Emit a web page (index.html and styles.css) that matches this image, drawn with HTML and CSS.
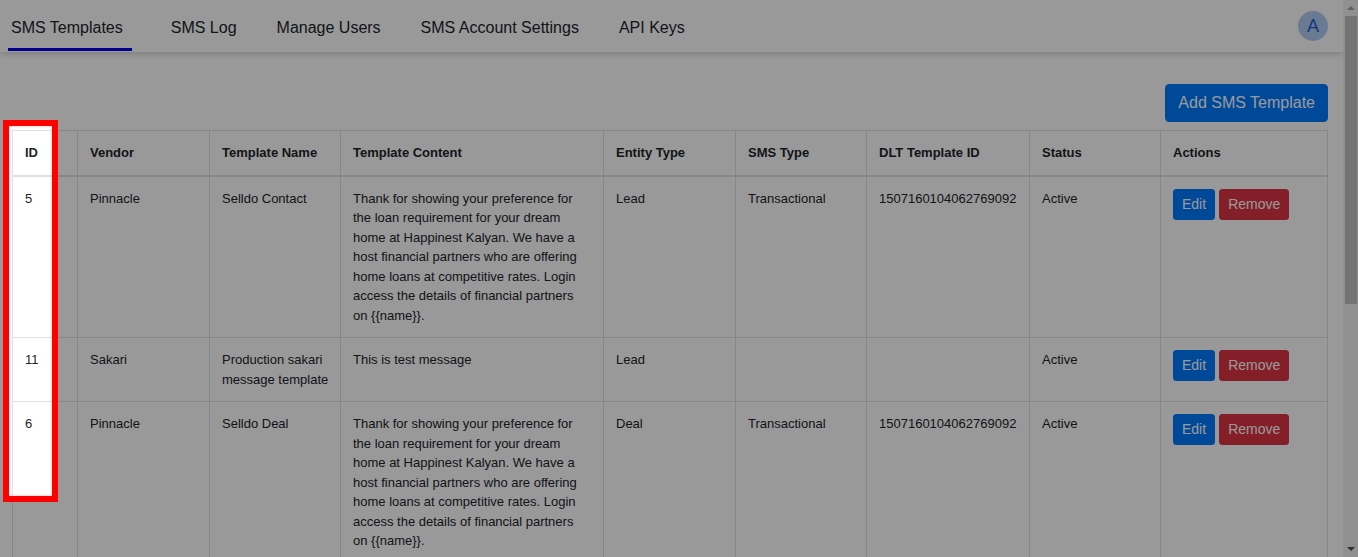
FILE: index.html
```html
<!DOCTYPE html>
<html lang="en">
<head>
<meta charset="utf-8">
<title>SMS Templates</title>
<link rel="stylesheet" href="styles.css">
</head>
<body>
<div class="app">
  <div class="main">
    <header class="navbar">
      <nav class="tabs">
        <a class="tab active">SMS Templates</a>
        <a class="tab">SMS Log</a>
        <a class="tab">Manage Users</a>
        <a class="tab">SMS Account Settings</a>
        <a class="tab">API Keys</a>
      </nav>
      <div class="avatar">A</div>
    </header>
    <main class="content">
      <div class="toolbar">
        <button class="btn btn-primary">Add SMS Template</button>
      </div>
      <table class="table">
        <colgroup>
          <col class="c-id"><col class="c-vendor"><col class="c-name"><col class="c-content"><col class="c-entity"><col class="c-type"><col class="c-dlt"><col class="c-status"><col class="c-actions">
        </colgroup>
        <thead>
          <tr>
            <th>ID</th><th>Vendor</th><th>Template Name</th><th>Template Content</th><th>Entity Type</th><th>SMS Type</th><th>DLT Template ID</th><th>Status</th><th>Actions</th>
          </tr>
        </thead>
        <tbody>
          <tr>
            <td>5</td>
            <td>Pinnacle</td>
            <td class="name">Selldo Contact</td>
            <td>Thank for showing your preference for the loan requirement for your dream home at Happinest Kalyan. We have a host financial partners who are offering home loans at competitive rates. Login access the details of financial partners on {{name}}.</td>
            <td>Lead</td>
            <td>Transactional</td>
            <td>1507160104062769092</td>
            <td>Active</td>
            <td class="actions"><button class="btn btn-sm btn-primary">Edit</button><button class="btn btn-sm btn-danger">Remove</button></td>
          </tr>
          <tr>
            <td>11</td>
            <td>Sakari</td>
            <td class="name">Production sakari message template</td>
            <td>This is test message</td>
            <td>Lead</td>
            <td></td>
            <td></td>
            <td>Active</td>
            <td class="actions"><button class="btn btn-sm btn-primary">Edit</button><button class="btn btn-sm btn-danger">Remove</button></td>
          </tr>
          <tr>
            <td>6</td>
            <td>Pinnacle</td>
            <td class="name">Selldo Deal</td>
            <td>Thank for showing your preference for the loan requirement for your dream home at Happinest Kalyan. We have a host financial partners who are offering home loans at competitive rates. Login access the details of financial partners on {{name}}.</td>
            <td>Deal</td>
            <td>Transactional</td>
            <td>1507160104062769092</td>
            <td>Active</td>
            <td class="actions"><button class="btn btn-sm btn-primary">Edit</button><button class="btn btn-sm btn-danger">Remove</button></td>
          </tr>
        </tbody>
      </table>
    </main>
  </div>
  <div class="scrollbar">
    <div class="sb-arrow sb-up"></div>
    <div class="sb-thumb"></div>
    <div class="sb-track"></div>
    <div class="sb-arrow sb-down"></div>
  </div>
</div>
<div class="spotlight"></div>
</body>
</html>
```
FILE: styles.css
```css
html, body {
  margin: 0;
  padding: 0;
  height: 557px;
  overflow: hidden;
  background: #fff;
  font-family: "Liberation Sans", Arial, sans-serif;
  color: #212529;
}
.app {
  display: flex;
  height: 557px;
}
.main {
  flex: 1;
  min-width: 0;
  overflow: hidden;
}
.navbar {
  height: 52px;
  display: flex;
  align-items: stretch;
  justify-content: space-between;
  padding: 0 15px 0 8px;
  background: #fff;
  box-shadow: 0 2px 6px rgba(0, 0, 0, 0.18);
  position: relative;
}
.tabs {
  display: flex;
  gap: 36px;
}
.tab {
  display: flex;
  align-items: center;
  padding: 7px 1px 0 3px;
  margin-bottom: 1px;
  font-size: 16px;
  color: #212529;
  border-bottom: 3px solid transparent;
}
.tab.active {
  padding-right: 9px;
  border-bottom-color: #0000ee;
}
.avatar {
  align-self: center;
  width: 30px;
  height: 30px;
  border-radius: 50%;
  background: #b3ccf6;
  color: #1a5fd0;
  font-size: 18px;
  display: flex;
  align-items: center;
  justify-content: center;
}
.content {
  padding: 32px 15px 0 12px;
}
.toolbar {
  display: flex;
  justify-content: flex-end;
  margin-bottom: 8px;
}
.btn {
  font-family: inherit;
  border: 1px solid transparent;
  border-radius: 4px;
  color: #fff;
  font-size: 16px;
  line-height: 1.5;
  padding: 6px 12px;
  cursor: pointer;
}
.btn-primary {
  background: #007bff;
  border-color: #007bff;
}
.btn-danger {
  background: #dc3545;
  border-color: #dc3545;
}
.btn-sm {
  font-size: 14px;
  padding: 4px 8px;
  border-radius: 3px;
  margin-right: 4px;
}
.table {
  width: 1315px;
  border-collapse: collapse;
  table-layout: fixed;
  font-size: 13px;
  line-height: 1.5;
  border: 1px solid #dee2e6;
}
.table th, .table td {
  border: 1px solid #dee2e6;
  padding: 12px;
  text-align: left;
  vertical-align: top;
}
.table td.name {
  padding-right: 8px;
}
.table thead th {
  font-weight: bold;
  border-bottom: 2px solid #dee2e6;
}
.table td.actions {
  white-space: nowrap;
}
.c-id { width: 65px; }
.c-vendor { width: 132px; }
.c-name { width: 131px; }
.c-content { width: 263px; }
.c-entity { width: 132px; }
.c-type { width: 131px; }
.c-dlt { width: 163px; }
.c-status { width: 131px; }
.c-actions { width: 167px; }

.scrollbar {
  width: 15px;
  flex: none;
  display: flex;
  flex-direction: column;
  background: #f1f1f1;
}
.sb-arrow {
  height: 16px;
  display: flex;
  align-items: center;
  justify-content: center;
}
.sb-up::before {
  content: "";
  border-left: 4px solid transparent;
  border-right: 4px solid transparent;
  border-bottom: 4px solid #a3a3a3;
}
.sb-down::before {
  content: "";
  border-left: 4px solid transparent;
  border-right: 4px solid transparent;
  border-top: 4px solid #505050;
}
.sb-thumb {
  height: 288px;
  margin: 0 1px 0 2px;
  background: #c1c1c1;
}
.sb-track {
  flex: 1;
}
.spotlight {
  position: absolute;
  left: 3px;
  top: 120px;
  width: 43px;
  height: 370px;
  border: 6px solid #ff0000;
  box-shadow: 0 0 0 3000px rgba(0, 0, 0, 0.4), inset 0 0 3px rgba(0, 0, 0, 0.25);
  pointer-events: none;
}
```
